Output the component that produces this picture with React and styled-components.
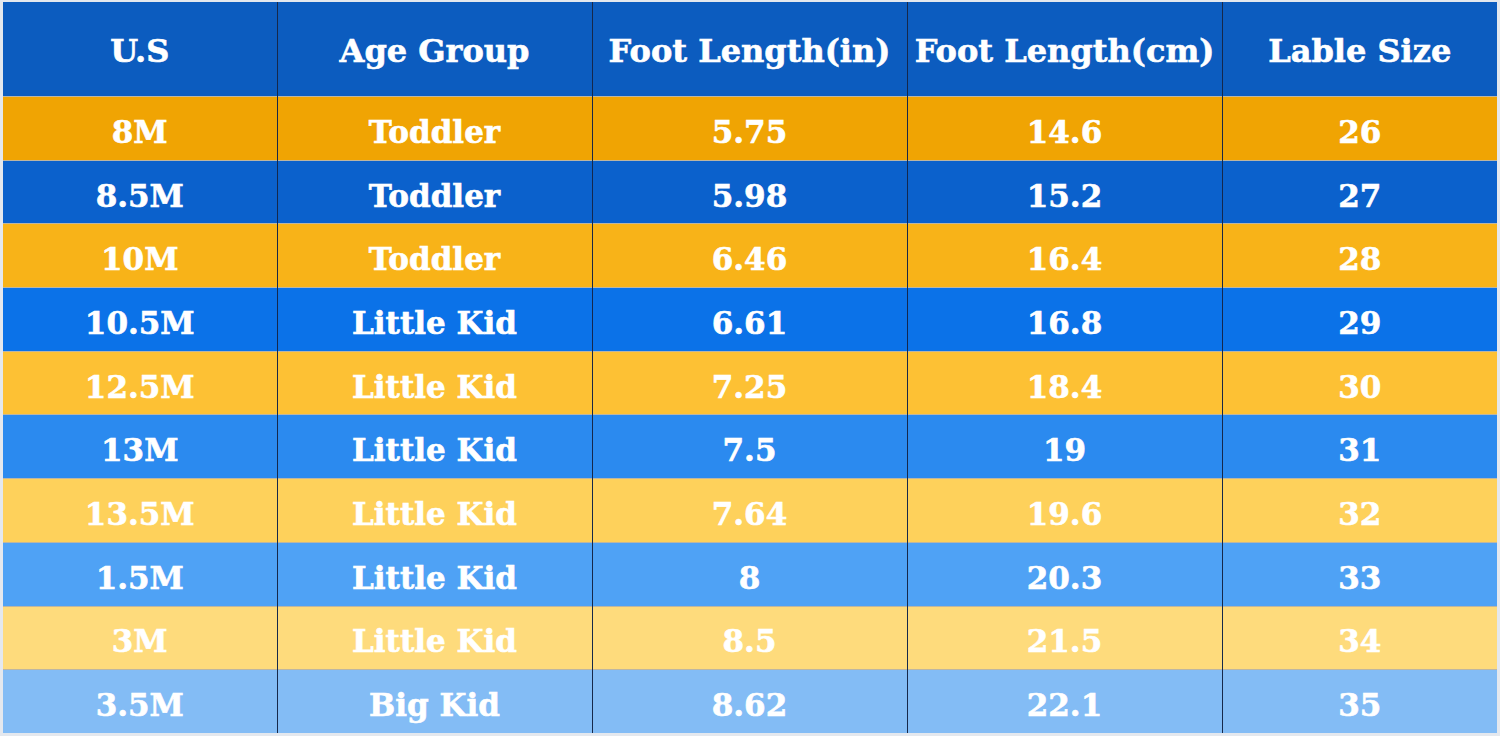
import React from 'react'
import styled, { createGlobalStyle } from 'styled-components';

const GlobalStyle = createGlobalStyle`
  html, body { margin: 0; padding: 0; background: #e4e8ee; }
  body { width: 1500px; height: 736px; overflow: hidden; }
`;

const columns = ['U.S', 'Age Group', 'Foot Length(in)', 'Foot Length(cm)', 'Lable Size'];
const widths = [274, 315, 315, 315, 275];

const rows = [
  { bg: '#f0a403', cells: ['8M', 'Toddler', '5.75', '14.6', '26'] },
  { bg: '#0b61cc', cells: ['8.5M', 'Toddler', '5.98', '15.2', '27'] },
  { bg: '#f8b318', cells: ['10M', 'Toddler', '6.46', '16.4', '28'] },
  { bg: '#0b72e8', cells: ['10.5M', 'Little Kid', '6.61', '16.8', '29'] },
  { bg: '#fdc134', cells: ['12.5M', 'Little Kid', '7.25', '18.4', '30'] },
  { bg: '#2b8aef', cells: ['13M', 'Little Kid', '7.5', '19', '31'] },
  { bg: '#fed15b', cells: ['13.5M', 'Little Kid', '7.64', '19.6', '32'] },
  { bg: '#4fa2f5', cells: ['1.5M', 'Little Kid', '8', '20.3', '33'] },
  { bg: '#fedb7c', cells: ['3M', 'Little Kid', '8.5', '21.5', '34'] },
  { bg: '#83bcf5', cells: ['3.5M', 'Big Kid', '8.62', '22.1', '35'] },
];

const Frame = styled.div`
  padding: 2px 3px;
  box-sizing: border-box;
  width: 1500px;
  height: 736px;
`;

const Table = styled.table`
  width: 1494px;
  border-collapse: collapse;
  table-layout: fixed;
  font-family: "DejaVu Serif", "Liberation Serif", serif;
  font-weight: bold;
  color: #ffffff;
  -webkit-text-stroke: 0.6px #ffffff;
`;

const HeadCell = styled.th`
  height: 90px;
  padding: 4px 0 0;
  background: #0c5cbf;
  font-size: 32px;
  font-weight: bold;
  text-align: center;
  white-space: nowrap;
  border-left: 1px solid #16284a;
  &:first-child { border-left: none; }
`;

const Row = styled.tr`
  background: ${({ $bg }) => $bg};
  border-top: 1px solid #bdb6a2;
`;

const Cell = styled.td`
  height: 55.7px;
  padding: 7px 0 0;
  font-size: 31px;
  text-align: center;
  white-space: nowrap;
  border-left: 1px solid #16284a;
  &:first-child { border-left: none; }
`;

const App = () => {
  return (
    <>
      <GlobalStyle />
      <Frame>
        <Table>
          <colgroup>
            {widths.map((w, i) => <col key={i} style={{ width: w }} />)}
          </colgroup>
          <thead>
            <tr>
              {columns.map(c => <HeadCell key={c}>{c}</HeadCell>)}
            </tr>
          </thead>
          <tbody>
            {rows.map((r, i) => (
              <Row key={i} $bg={r.bg}>
                {r.cells.map((c, j) => <Cell key={j}>{c}</Cell>)}
              </Row>
            ))}
          </tbody>
        </Table>
      </Frame>
    </>
  )
}

export default App
